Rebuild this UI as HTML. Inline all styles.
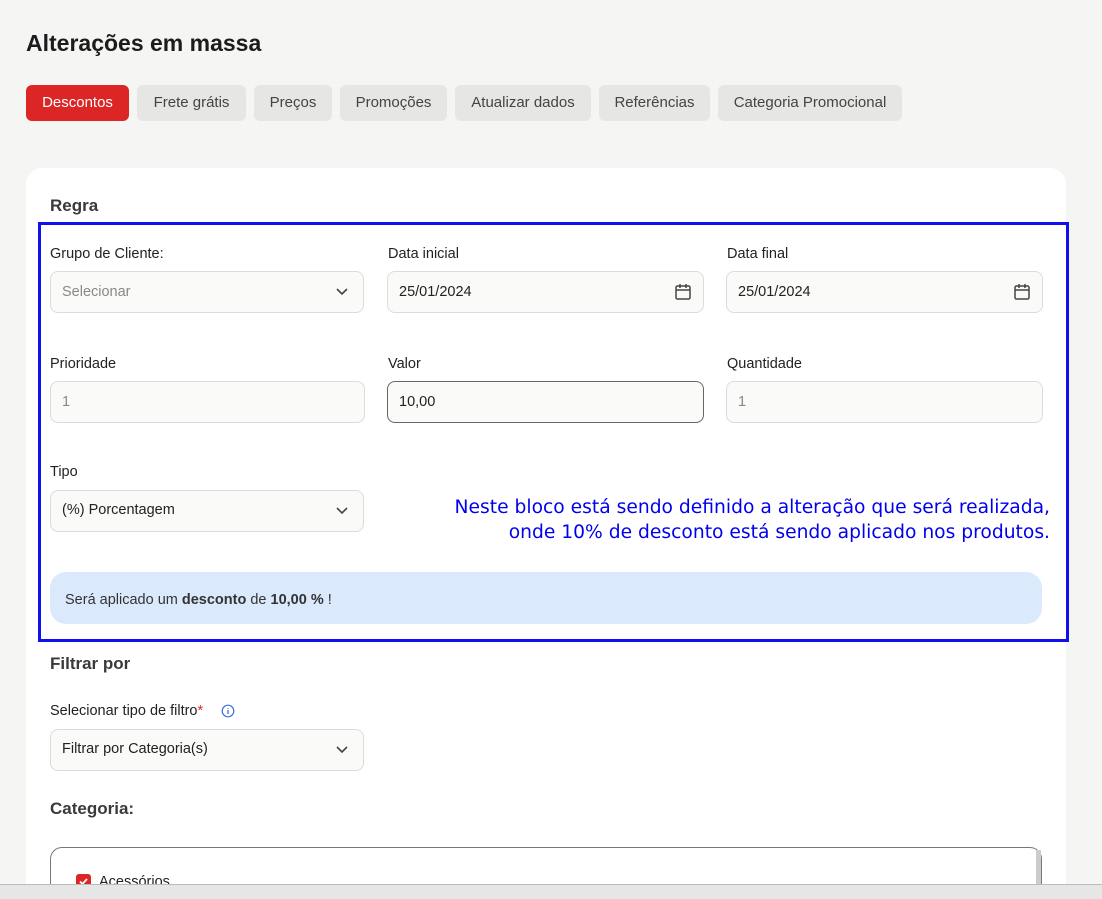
<!DOCTYPE html>
<html><head><meta charset="utf-8"><style>
*{box-sizing:border-box;margin:0;padding:0}
html,body{width:1102px;height:899px;overflow:hidden}
body{background:#f5f5f4;font-family:"Liberation Sans",sans-serif;position:relative;color:#222}
.abs{position:absolute}
h1{position:absolute;left:26px;top:30px;font-size:23px;font-weight:bold;color:#1c1c1c}
.tab{position:absolute;top:85px;height:36px;border-radius:6px;background:#e6e6e5;color:#444;font-size:15px;line-height:36px;text-align:center}
.card{position:absolute;left:26px;top:168px;width:1040px;height:731px;background:#fff;border-radius:16px 16px 0 0}
.lbl{position:absolute;font-size:14.5px;color:#222}
.inp{position:absolute;height:42px;border:1px solid #dcdcdc;border-radius:8px;background:#fafaf9;font-size:14.5px;line-height:40px;padding-left:11px;color:#222}
.h2{position:absolute;font-size:17px;font-weight:bold;color:#3a3a3a}
.chev{position:absolute;right:14px;top:15px}
.cal{position:absolute;right:10px;top:10px}
</style></head><body>
<h1>Alterações em massa</h1>
<div class="tab" style="left:26px;width:103px;background:#dc2626;color:#fff">Descontos</div>
<div class="tab" style="left:137px;width:109px">Frete grátis</div>
<div class="tab" style="left:254px;width:78px">Preços</div>
<div class="tab" style="left:340px;width:107px">Promoções</div>
<div class="tab" style="left:455px;width:136px">Atualizar dados</div>
<div class="tab" style="left:599px;width:111px">Referências</div>
<div class="tab" style="left:718px;width:184px">Categoria Promocional</div>
<div class="card"></div>
<div class="h2" style="left:50px;top:196px">Regra</div>
<div class="abs" style="left:38px;top:222px;width:1031px;height:420px;border:3px solid #1010ee"></div>

<div class="lbl" style="left:50px;top:246px">Grupo de Cliente:</div>
<div class="inp" style="left:50px;top:271px;width:314px;color:#888">Selecionar<svg class="chev" width="14" height="9" viewBox="0 0 14 9"><path d="M2 2l5 5 5-5" fill="none" stroke="#444" stroke-width="1.6"/></svg></div>
<div class="lbl" style="left:388px;top:246px">Data inicial</div>
<div class="inp" style="left:387px;top:271px;width:317px">25/01/2024<svg class="cal" width="20" height="20" viewBox="0 0 20 20"><rect x="3" y="4" width="14" height="13" rx="1.5" fill="none" stroke="#444" stroke-width="1.5"/><path d="M3 8h14M7 2v4M13 2v4" stroke="#444" stroke-width="1.5"/></svg></div>
<div class="lbl" style="left:727px;top:246px">Data final</div>
<div class="inp" style="left:726px;top:271px;width:317px">25/01/2024<svg class="cal" width="20" height="20" viewBox="0 0 20 20"><rect x="3" y="4" width="14" height="13" rx="1.5" fill="none" stroke="#444" stroke-width="1.5"/><path d="M3 8h14M7 2v4M13 2v4" stroke="#444" stroke-width="1.5"/></svg></div>

<div class="lbl" style="left:50px;top:356px">Prioridade</div>
<div class="inp" style="left:50px;top:381px;width:315px;color:#888">1</div>
<div class="lbl" style="left:388px;top:356px">Valor</div>
<div class="inp" style="left:387px;top:381px;width:317px;border-color:#666">10,00</div>
<div class="lbl" style="left:727px;top:356px">Quantidade</div>
<div class="inp" style="left:726px;top:381px;width:317px;color:#888">1</div>

<div class="lbl" style="left:50px;top:464px">Tipo</div>
<div class="inp" style="left:50px;top:490px;width:314px;line-height:38px">(%) Porcentagem<svg class="chev" width="14" height="9" viewBox="0 0 14 9"><path d="M2 2l5 5 5-5" fill="none" stroke="#444" stroke-width="1.6"/></svg></div>

<div class="abs" style="right:52px;top:495px;text-align:right;font-family:'DejaVu Sans',sans-serif;font-size:18.7px;line-height:25px;color:#0000ee">Neste bloco está sendo definido a alteração que será realizada,<br>onde 10% de desconto está sendo aplicado nos produtos.</div>

<div class="abs" style="left:50px;top:572px;width:992px;height:52px;background:#dbe9fd;border-radius:16px;font-size:14.5px;line-height:56px;padding-left:15px;color:#333">Será aplicado um <b>desconto</b> de <b>10,00 %</b> !</div>

<div class="h2" style="left:50px;top:654px">Filtrar por</div>
<div class="lbl" style="left:50px;top:703px">Selecionar tipo de filtro<span style="color:#dc2626">*</span></div>
<svg class="abs" style="left:221px;top:704px" width="14" height="14" viewBox="0 0 14 14"><circle cx="7" cy="7" r="5.8" fill="none" stroke="#3b6fe0" stroke-width="1.2"/><path d="M7 6v4M7 4v.8" stroke="#3b6fe0" stroke-width="1.3"/></svg>
<div class="inp" style="left:50px;top:729px;width:314px;line-height:38px">Filtrar por Categoria(s)<svg class="chev" width="14" height="9" viewBox="0 0 14 9"><path d="M2 2l5 5 5-5" fill="none" stroke="#444" stroke-width="1.6"/></svg></div>
<div class="h2" style="left:50px;top:799px">Categoria:</div>
<div class="abs" style="left:50px;top:847px;width:992px;height:60px;border:1px solid #777;border-radius:12px;background:#fff"></div>
<div class="abs" style="left:1036px;top:850px;width:5px;height:40px;background:#ccc"></div>
<svg class="abs" style="left:76px;top:874px" width="15" height="15" viewBox="0 0 15 15"><rect width="15" height="15" rx="3" fill="#dc2626"/><path d="M4 7.5l2.5 2.5 4.5-5" fill="none" stroke="#fff" stroke-width="1.8"/></svg>
<div class="abs" style="left:99px;top:874px;font-size:14.5px">Acessórios</div>
<div class="abs" style="left:0;top:884px;width:1102px;height:15px;background:#e6e6e6;border-top:1px solid #bbb"></div>
</body></html>
